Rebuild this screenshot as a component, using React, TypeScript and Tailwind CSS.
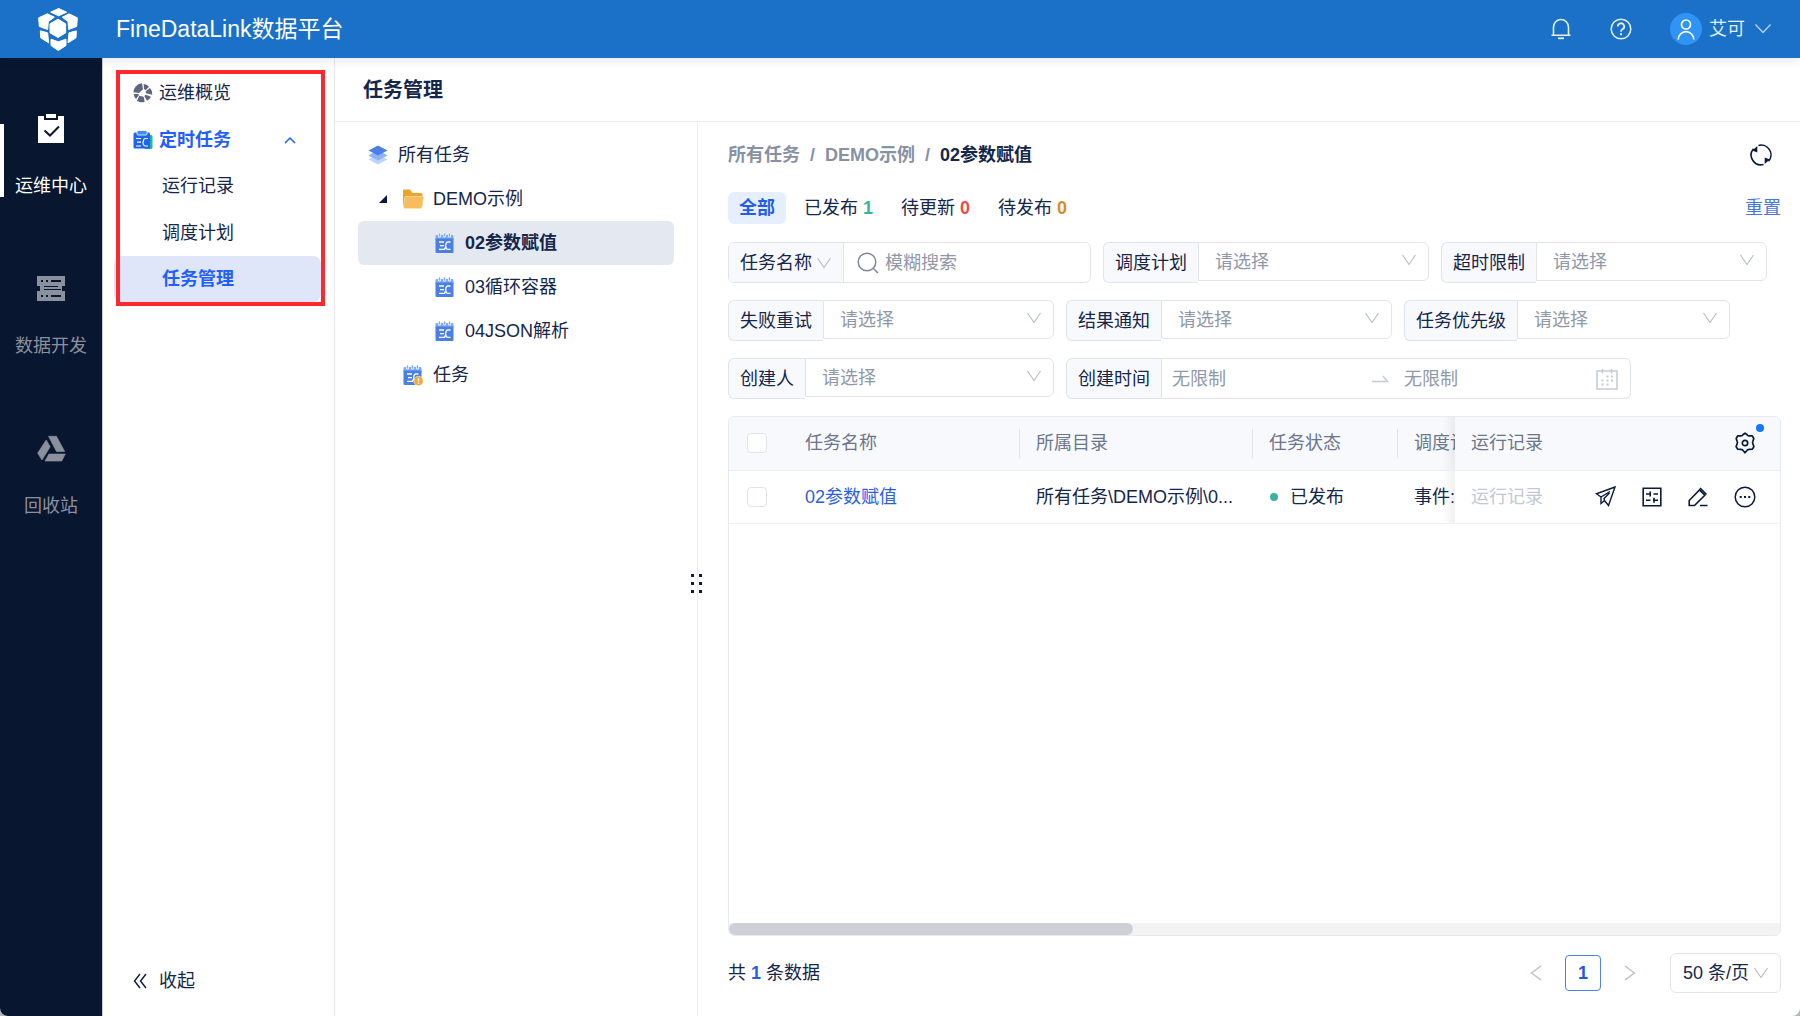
// App.tsx
// Ops center → task management page.
import React, { useState } from "react";
import clsx from "clsx";

/* ---------- icons ---------- */

function Logo() {
  return (
    <svg viewBox="112 20 126 134" className="h-[45px] w-[42px]" fill="#fff" stroke="#fff" strokeWidth="3" strokeLinejoin="round">
      <path d="M177 24 201 35 177 46 153 35Z" />
      <path d="M143 40 164 50 146 63 144 87 119 78 117 52Z" />
      <path d="M208 40 188 50 205 63 207 87 231 78 233 52Z" />
      <path d="M175 56 198 70V97L175 111 151 97V70Z" />
      <path d="M122 91 144 97 147 127 123 112Z" />
      <path d="M230 91 208 97 205 127 229 112Z" />
      <path d="M154 116 176 124 199 116V135L176 150 154 135Z" />
    </svg>
  );
}

function ClipboardIcon() {
  return (
    <svg viewBox="0 0 26 29" className="h-[29px] w-[26px]">
      <path d="M0 2h26v27H0z" fill="currentColor" />
      <path d="M6 0h14v6H6z" fill="#08162f" />
      <path d="M8 0h10v4H8z" fill="currentColor" />
      <path d="m6.500 16.500 5.500 5 9-9" fill="none" stroke="#08162f" strokeWidth="2" />
    </svg>
  );
}

function ServerIcon() {
  return (
    <svg viewBox="0 0 28 25" className="h-[25px] w-[28px]">
      <path d="M0 0h28v10H0zM3 10h22v5H3zM0 15h28v10H0z" fill="currentColor" />
      <path d="M4 4h2v2H4zM9 4h2v2H9zM14 4h10v2H14zM4 19h2v2H4zM9 19h2v2H9zM14 19h10v2H14zM0 10h3v5H0zM7 10h14v1H7zM7 13h17v1H7zM25 10h3v5h-3z" fill="#08162f" />
    </svg>
  );
}

function RecycleIcon() {
  return (
    <svg viewBox="108 584 88 80" className="h-[27px] w-[29px]" fill="currentColor" stroke="currentColor" strokeWidth="2" strokeLinejoin="round">
      <path d="M136 598 148 619 123 659 110 638Z" />
      <path d="M143 587H167L192 633H167Z" />
      <path d="M144 641H194L183 662H132Z" />
    </svg>
  );
}

function OverviewIcon() {
  return (
    <svg viewBox="399 249 60 60" className="size-5" fill="#5d6780">
      <path d="M400 277A28 28 0 0 1 426 250L429 268 417 279Z" />
      <path d="M431 252A27 27 0 0 1 447 260L437 271A10 10 0 0 0 432 268Z" />
      <path d="M450 264A26 26 0 0 1 457 284L438 280 437 274Z" />
      <path d="M437 284 453 290A25 25 0 0 1 441 302L433 288Z" />
      <path d="M418 287 431 290 434 305A26 26 0 0 1 411 302Z" />
      <path d="M401 282 415 282 417 285 408 297A24 24 0 0 1 401 282Z" />
    </svg>
  );
}

function TimedTaskIcon() {
  return (
    <svg viewBox="0 0 20 20" className="size-5">
      <rect x="11" y="5" width="8.500" height="14" rx="1.500" fill="#1fb89a" />
      <path d="M2 2.500h13.500A1.500 1.500 0 0 1 17 4v14.500H2A1.500 1.500 0 0 1 .5 17V4A1.500 1.500 0 0 1 2 2.500Z" fill="#1f63f5" />
      <rect x="4" y=".500" width="10" height="4.500" rx="1" fill="#3f8cff" stroke="#fff" strokeWidth=".8" />
      <path d="M3 8.500h5M4 12.200h4M3 16h5M15 8.500h-2.500q-1.500 0-1.900 1.500l-.6 2.200q.2 3.800 2.500 3.800H15" fill="none" stroke="#fff" strokeWidth="1.200" />
    </svg>
  );
}

function CalendarTask({ warn = false }: { warn?: boolean }) {
  return (
    <svg viewBox="0 0 20 21" className="h-[21px] w-5 shrink-0">
      <path d="M1.500 2h16A1 1 0 0 1 18.500 3v4H.500V3a1 1 0 0 1 1-1Z" fill="#7eabf8" />
      <path d="M.500 5.500h18v13.500a1 1 0 0 1-1 1h-16a1 1 0 0 1-1-1Z" fill="#4b7fe8" />
      <path d="M4.500 1.500v1.500M9.500 1.500v1.500M14.500 1.500v1.500" stroke="#fff" strokeWidth="3" strokeLinecap="round" />
      <path d="M4.500 1v2M9.500 1v2M14.500 1v2" stroke="#7eabf8" strokeWidth="1.600" strokeLinecap="round" />
      <path d="M4 9h5M5 12.700h4M4 16.400h5.500l1.500-3M15.500 9h-2.500q-1.600 0-2 1.600l-.4 2.100q.3 3.700 2.600 3.700h2.300" fill="none" stroke="#fff" strokeWidth="1.300" />
      {warn && (
        <>
          <circle cx="15.500" cy="16" r="4.700" fill="#f0a93a" stroke="#fff" strokeWidth=".5" />
          <path d="M15.500 13.200v3.300M15.500 17.500v1.300" stroke="#fff" strokeWidth="1.300" />
        </>
      )}
    </svg>
  );
}

function LayersIcon() {
  return (
    <svg viewBox="0 0 20 20" className="size-5 shrink-0">
      <path d="m10 9 9.500 5.500L10 19.500.5 14.500Z" fill="#bcd3fd" />
      <path d="m10 5 9.500 5.500L10 15.500.5 10.500Z" fill="#8db2fa" />
      <path d="m10 .5 9.500 5L10 10.500.5 5.500Z" fill="#4b7fe8" />
    </svg>
  );
}

function FolderIcon() {
  return (
    <svg viewBox="0 0 22 20" className="h-5 w-[22px] shrink-0">
      <path d="M2 .5h6l2.500 3.500H19a1.500 1.500 0 0 1 1.500 1.500V17H2.500A1.500 1.500 0 0 1 1 15.500v-14a1 1 0 0 1 1-1Z" fill="#efa32d" />
      <path d="M4 7.500h16.500a1 1 0 0 1 1 1.200l-1.600 9.500a1.500 1.500 0 0 1-1.500 1.300H3a1.500 1.500 0 0 1-1.400-1.500L2.700 8.600A1.300 1.300 0 0 1 4 7.500Z" fill="#f9bc5a" stroke="#fde3b4" strokeWidth=".7" />
    </svg>
  );
}

function Chevron({ className }: { className?: string }) {
  return (
    <svg viewBox="0 0 16 12" className={clsx("h-3 w-4 shrink-0", className)} fill="none" stroke="currentColor" strokeWidth="1.200">
      <path d="M1.500 1 8 10.500 14.500 1" />
    </svg>
  );
}

function SearchIcon() {
  return (
    <svg viewBox="0 0 22 22" className="size-[22px] shrink-0" fill="none" stroke="#7c879c" strokeWidth="1.500">
      <circle cx="10" cy="10" r="8.800" />
      <path d="m16.500 16.500 4.500 4.500" />
    </svg>
  );
}

function DateIcon() {
  return (
    <svg viewBox="0 0 22 22" className="size-[22px]" fill="none" stroke="#c5cad5" strokeWidth="1.500">
      <path d="M1 3h20v18H1zM6.500 1v4.500M15.500 1v4.500" />
      <path d="M10.500 8.500h2M15 8.500h2M5.500 12.500h2M10.500 12.500h2M15 12.500h2M5.500 16.500h2M10.500 16.500h2" strokeWidth="2" />
    </svg>
  );
}

function RefreshIcon() {
  return (
    <svg viewBox="0 0 22 22" className="size-[22px]" fill="none" stroke="#0a1a3c" strokeWidth="1.600">
      <path d="M8.500 1.400A9.800 9.800 0 0 1 18.500 17.300M13.500 20.500A9.800 9.800 0 0 1 3.500 4.700" />
      <path d="M7.300 2v6.500L2.300 6.500ZM14.700 20v-6.500L19.700 15.500Z" fill="#0a1a3c" stroke="none" />
    </svg>
  );
}

function BellIcon() {
  return (
    <svg viewBox="0 0 20 22" className="h-[22px] w-5" fill="none" stroke="#e3eefa" strokeWidth="1.600">
      <path d="M2.500 17V9a7.500 7.500 0 0 1 15 0v8M.500 17.200h19" />
      <path d="M7 20.300h6" strokeWidth="1.800" />
    </svg>
  );
}

function HelpIcon() {
  return (
    <svg viewBox="0 0 22 22" className="size-[22px]" fill="none" stroke="#e3eefa" strokeWidth="1.500">
      <circle cx="11" cy="11" r="9.800" />
      <path d="M7.800 8.500a3.200 3.200 0 1 1 4.700 2.800q-1.500.8-1.500 2.500" strokeWidth="1.800" />
      <path d="M11 15.200v2" strokeWidth="2" />
    </svg>
  );
}

function GearIcon() {
  return (
    <svg viewBox="0 0 22 22" className="size-[22px]" fill="none" stroke="#0a1a3c" strokeWidth="1.700" strokeLinejoin="round">
      <path d="M8.800 2.800 11 1.200l2.200 1.600q.5 1 1.700 1l3.400.1 1.500 2.600-.9 2.700q-.8 1.300 0 2.700l1 2.600-1.500 2.600-3.500.2q-1.100 0-1.700 1L11 20.800l-2.200-2.500q-.6-1-1.700-1l-3.500-.2-1.500-2.600 1-2.600q.8-1.400 0-2.700l-.9-2.700 1.500-2.600 3.400-.1q1.200 0 1.700-1Z" />
      <circle cx="11" cy="11" r="2.700" />
    </svg>
  );
}

function SendIcon() {
  return (
    <svg viewBox="0 0 21 21" className="size-[21px]" fill="none" stroke="#0a1a3c" strokeWidth="1.400">
      <path d="M20 1 1.500 7.800 6 11v6.500l3.500-3 4 5ZM6 11l9-5.500M9.500 14.500l-.5-2 5.500-5.500" />
    </svg>
  );
}

function ParamIcon() {
  return (
    <svg viewBox="0 0 20 20" className="size-5" fill="none" stroke="#0a1a3c" strokeWidth="1.600">
      <path d="M1.200 1.200h17.600v17.600H1.200zM4 7h5M8.200 4.500v5M11.500 7h4.500M4 13.200h4.500M11 13.200h5M12 10.800v5" />
    </svg>
  );
}

function EditIcon() {
  return (
    <svg viewBox="0 0 20 20" className="size-5" fill="none" stroke="#0a1a3c" strokeWidth="1.600">
      <path d="M1.200 13.500 11.500 3l5.300 5.300L6.500 18.500H1.200ZM12 1l6.500 6.500M12 18.500h7.500" />
    </svg>
  );
}

function MoreIcon() {
  return (
    <svg viewBox="0 0 22 22" className="size-[22px]" fill="none" stroke="#0a1a3c" strokeWidth="1.500">
      <circle cx="11" cy="11" r="9.800" />
      <path d="M5.700 11h2M10 11h2M14.300 11h2" strokeWidth="2" />
    </svg>
  );
}

/* ---------- data ---------- */

const MODULES = [
  { label: "运维中心", icon: <ClipboardIcon /> },
  { label: "数据开发", icon: <ServerIcon /> },
  { label: "回收站", icon: <RecycleIcon /> },
];

const TABS = [
  { label: "已发布", count: 1, color: "text-[#3bb3a3]" },
  { label: "待更新", count: 0, color: "text-[#f04b4b]" },
  { label: "待发布", count: 0, color: "text-[#d98c1f]" },
];

const FILTER_BOX = "flex w-[326px] items-start";
const FILTER_LABEL = "flex h-[41px] shrink-0 items-center rounded-l-md border border-[#e1e4ed] bg-[#f8f9fd] px-[11px]";

/* ---------- parts ---------- */

function SelectFilter({ id, label }: { id: string; label: string }) {
  return (
    <div className={FILTER_BOX}>
      <label htmlFor={id} className={clsx(FILTER_LABEL, "border-r-0")}>{label}</label>
      <div className="relative min-w-0 flex-1">
        <select id={id} className="h-[39px] w-full appearance-none rounded-r-md border border-[#e1e4ed] bg-white pl-4 text-[#8f98aa] outline-none">
          <option>请选择</option>
        </select>
        <Chevron className="pointer-events-none absolute top-3 right-3 text-[#b9bfcb]" />
      </div>
    </div>
  );
}

function Topbar() {
  return (
    <header className="relative z-10 flex h-[58px] shrink-0 items-center bg-[#1a71c7] pr-7 pl-[37px] text-white shadow-[0_2px_10px_rgba(30,50,90,0.12)]">
      <Logo />
      <h1 className="ml-[37px] text-[23px]">FineDataLink数据平台</h1>
      <div className="ml-auto flex items-center">
        <button type="button" aria-label="通知" className="mr-[39px]"><BellIcon /></button>
        <button type="button" aria-label="帮助" className="mr-[38px]"><HelpIcon /></button>
        <button type="button" className="flex items-center text-[#e3eefa]">
          <span className="mr-[7px] flex size-8 items-center justify-center rounded-full bg-[#2f94f6]">
            <svg viewBox="0 0 18 21" className="h-[21px] w-[18px]" fill="none" stroke="#fff" strokeWidth="1.700">
              <circle cx="9" cy="5.500" r="4.500" />
              <path d="M1.200 20.500a7.800 7.800 0 0 1 15.600 0" />
            </svg>
          </span>
          艾可
          <svg viewBox="0 0 18 12" className="ml-[9px] h-3 w-[18px]" fill="none" stroke="#b5d2ef" strokeWidth="1.400">
            <path d="m1.500 1.500 7.500 8 7.500-8" />
          </svg>
        </button>
      </div>
    </header>
  );
}

function ModuleRail() {
  return (
    <nav className="flex w-[102px] shrink-0 flex-col bg-[#08162f] pt-[50px]">
      {MODULES.map((m, i) => (
        <a key={m.label} href="#" className={clsx("relative flex h-40 flex-col items-center", i === 0 ? "text-white" : "text-[#8b909d]")}>
          {i === 0 && <span className="absolute top-4 left-0 h-[73px] w-1 bg-white" />}
          <span className="flex h-10 items-center">{m.icon}</span>
          <span className="mt-[26px]">{m.label}</span>
        </a>
      ))}
    </nav>
  );
}

function SideMenu() {
  const [open, setOpen] = useState(true);
  return (
    <aside className="relative flex w-[233px] shrink-0 flex-col border-x border-[#e6e9f1] border-l-[#c8ccd5] pt-3">
      <div className="ml-[11px] flex w-[207px] flex-col">
        <a href="#" className="flex h-[46px] items-center gap-[6px] pl-[19px]"><OverviewIcon />运维概览</a>
        <button type="button" onClick={() => setOpen(!open)} className="flex h-[47px] items-center gap-[6px] pl-[19px] font-bold text-[#1f5eff]">
          <TimedTaskIcon />定时任务
          <svg viewBox="0 0 12 8" className="mr-[25px] ml-auto h-2 w-3" fill="none" stroke="currentColor" strokeWidth="1.500">
            <path d="m1 7 5-5 5 5" />
          </svg>
        </button>
        {open && (
          <>
            <a href="#" className="flex h-[46px] items-center pl-12">运行记录</a>
            <a href="#" className="flex h-[47px] items-center pl-12">调度计划</a>
            <a href="#" className="flex h-[46px] items-center rounded-lg bg-[#e0e6fa] pl-12 font-bold text-[#1f5eff]">任务管理</a>
          </>
        )}
      </div>
      {/* highlight frame round the menu group */}
      <div className="pointer-events-none absolute top-3 left-[13px] h-[236px] w-[209px] border-4 border-[#ff282d]" />
      <button type="button" className="mt-auto mb-[23px] flex items-center gap-3 pl-[30px]">
        <svg viewBox="0 0 14 16" className="h-4 w-[14px]" fill="none" stroke="#0a1a3c" strokeWidth="1.400">
          <path d="M7 1 1.500 8 7 15M13 1 7.500 8 13 15" />
        </svg>
        收起
      </button>
    </aside>
  );
}

function TaskTree() {
  return (
    <section className="relative w-[363px] shrink-0 border-r border-[#e9ebf0] px-[23px] pt-[11px]">
      <a href="#" className="flex h-11 items-center gap-[10px] pl-[10px]"><LayersIcon />所有任务</a>
      <a href="#" className="flex h-11 items-center pl-[21px]">
        <svg viewBox="0 0 8 8" className="mr-[15px] size-2"><path d="M8 0v8H0z" fill="#0a1a3c" /></svg>
        <FolderIcon />
        <span className="ml-[9px]">DEMO示例</span>
      </a>
      {["02参数赋值", "03循环容器", "04JSON解析"].map((name, i) => (
        <a key={name} href="#" className={clsx("flex h-11 items-center gap-[10px] rounded-md pl-[77px]", i === 0 && "bg-[#e4e8f0] font-bold")}>
          <CalendarTask />{name}
        </a>
      ))}
      <a href="#" className="flex h-11 items-center gap-[10px] pl-[45px]"><CalendarTask warn />任务</a>
      {/* resize handle */}
      <div className="absolute top-1/2 -right-[5px] z-10 grid h-7 w-[11px] grid-cols-2 content-center gap-[5px]">
        {[0, 1, 2, 3, 4, 5].map((d) => <span key={d} className="size-[3px] bg-[#0a1a3c]" />)}
      </div>
    </section>
  );
}

function Filters() {
  return (
    <form className="mt-[18px] flex flex-col gap-[17px]">
      <div className="flex gap-3">
        <div className="flex h-[41px] w-[363px] overflow-hidden rounded-md border border-[#e1e4ed]">
          <div className="relative w-[115px] shrink-0 border-r border-[#e1e4ed] bg-[#f8f9fd]">
            <select aria-label="搜索字段" className="h-full w-full appearance-none bg-transparent pl-[11px] outline-none">
              <option>任务名称</option>
            </select>
            <Chevron className="pointer-events-none absolute top-[14px] right-[11px] text-[#b9bfcb]" />
          </div>
          <label htmlFor="keyword" className="flex items-center pl-[13px]"><SearchIcon /></label>
          <input id="keyword" placeholder="模糊搜索" className="min-w-0 flex-1 pl-[6px] outline-none placeholder:text-[#8f98aa]" />
        </div>
        <SelectFilter id="plan" label="调度计划" />
        <SelectFilter id="timeout" label="超时限制" />
      </div>
      <div className="flex gap-3">
        <SelectFilter id="retry" label="失败重试" />
        <SelectFilter id="notice" label="结果通知" />
        <SelectFilter id="priority" label="任务优先级" />
      </div>
      <div className="flex gap-3">
        <SelectFilter id="creator" label="创建人" />
        <div className="flex h-[41px] w-[565px]">
          <label htmlFor="from" className={FILTER_LABEL}>创建时间</label>
          <div className="flex min-w-0 flex-1 items-center rounded-r-md border border-l-0 border-[#e1e4ed] pr-3 pl-[10px]">
            <input id="from" placeholder="无限制" className="w-[200px] outline-none placeholder:text-[#8f98aa]" />
            <svg viewBox="0 0 17 8" className="mr-[15px] h-2 w-[17px] shrink-0" fill="none" stroke="#c5cad5" strokeWidth="1.500">
              <path d="M0 6.500h15.500L11 1" />
            </svg>
            <input aria-label="结束时间" placeholder="无限制" className="min-w-0 flex-1 outline-none placeholder:text-[#8f98aa]" />
            <DateIcon />
          </div>
        </div>
      </div>
    </form>
  );
}

const CHECKBOX = "block size-5 appearance-none rounded border border-[#dfe3ec] bg-white";
const DIVIDED = "relative pl-[17px] text-left font-normal before:absolute before:top-3 before:left-0 before:h-[29px] before:w-px before:bg-[#e1e4ed]";
const PINNED = "relative pl-4 before:absolute before:inset-y-0 before:-left-3 before:w-3 before:bg-linear-to-r before:from-transparent before:to-black/6";

function TaskTable() {
  return (
    <div className="mt-[17px] flex flex-1 flex-col overflow-hidden rounded-md border border-[#e8eaf2]">
      <table className="w-full table-fixed border-collapse whitespace-nowrap">
        <colgroup>
          <col className="w-[60px]" />
          <col className="w-[230px]" />
          <col className="w-[233px]" />
          <col className="w-[145px]" />
          <col />
          <col className="w-[325px]" />
        </colgroup>
        <thead>
          <tr className="h-[53px] border-b border-[#eceef4] bg-[#f8f9fd] text-[#6b768c]">
            <th className="pl-[18px]"><input type="checkbox" aria-label="全选" className={CHECKBOX} /></th>
            <th className="pl-4 text-left font-normal">任务名称</th>
            <th className={DIVIDED}>所属目录</th>
            <th className={DIVIDED}>任务状态</th>
            <th className={DIVIDED}><div className="overflow-hidden">调度计划</div></th>
            <th className={clsx(PINNED, "text-left font-normal")}>
              <div className="flex items-center justify-between pr-6">
                运行记录
                <button type="button" aria-label="列设置" className="relative">
                  <GearIcon />
                  <span className="absolute -top-2 -right-2 size-2 rounded-full bg-[#1677ff]" />
                </button>
              </div>
            </th>
          </tr>
        </thead>
        <tbody>
          <tr className="h-[53px] border-b border-[#f0f1f5]">
            <td className="pl-[18px]"><input type="checkbox" aria-label="选择 02参数赋值" className={CHECKBOX} /></td>
            <td className="pl-4"><a href="#" className="text-[#2b5ee8]">02参数赋值</a></td>
            <td className="pl-[17px]">所有任务\DEMO示例\0...</td>
            <td className="pl-[17px]">
              <div className="flex items-center gap-3 pl-px">
                <span className="size-2 rounded-full bg-[#3bb3a3]" />已发布
              </div>
            </td>
            <td className="pl-[17px]"><div className="overflow-hidden">事件:</div></td>
            <td className={PINNED}>
              <div className="flex items-center gap-[26px] pr-6">
                <span className="mr-auto text-[#c3c8d2]">运行记录</span>
                <button type="button" aria-label="发布"><SendIcon /></button>
                <button type="button" aria-label="参数"><ParamIcon /></button>
                <button type="button" aria-label="编辑"><EditIcon /></button>
                <button type="button" aria-label="更多"><MoreIcon /></button>
              </div>
            </td>
          </tr>
        </tbody>
      </table>
      <div className="mt-auto h-3 bg-[#f3f3f4]">
        <div className="h-3 w-5/13 rounded-full bg-[#cdd1d7]" />
      </div>
    </div>
  );
}

function Pagination() {
  return (
    <footer className="mt-[17px] flex h-10 items-center">
      <p>共 <b className="text-[#2b5ee8]">1</b> 条数据</p>
      <div className="ml-auto flex items-center">
        <button type="button" aria-label="上一页">
          <svg viewBox="0 0 12 16" className="h-4 w-3" fill="none" stroke="#b9bfcb" strokeWidth="1.400"><path d="M11 1 1.500 8l9.500 7" /></svg>
        </button>
        <button type="button" className="mx-[23px] size-9 rounded-sm border border-[#4d7ff0] font-bold text-[#1f56e8]">1</button>
        <button type="button" aria-label="下一页">
          <svg viewBox="0 0 12 16" className="h-4 w-3" fill="none" stroke="#b9bfcb" strokeWidth="1.400"><path d="m1 1 9.500 7L1 15" /></svg>
        </button>
        <div className="relative ml-[34px]">
          <select aria-label="每页条数" className="h-10 w-[111px] appearance-none rounded-md border border-[#e1e4ed] bg-white pl-3 outline-none">
            <option>50 条/页</option>
          </select>
          <Chevron className="pointer-events-none absolute top-[14px] right-3 text-[#b9bfcb]" />
        </div>
      </div>
    </footer>
  );
}

export default function App() {
  return (
    <div className="bg-[#b4b6ba] font-['Liberation_Sans','Noto_Sans_CJK_SC',sans-serif] text-[18px] leading-6 text-[#14264b]">
      <div className="flex min-h-screen flex-col overflow-hidden rounded-b-lg bg-white">
        <Topbar />
        <div className="flex flex-1">
          <ModuleRail />
          <SideMenu />
          <main className="flex min-w-0 flex-1 flex-col">
            <div className="flex h-16 shrink-0 items-center border-b border-[#e9ebf0] pl-7">
              <h2 className="text-[20px] font-bold">任务管理</h2>
            </div>
            <div className="flex flex-1">
              <TaskTree />
              <section className="flex min-w-0 flex-1 flex-col pt-[21px] pr-[19px] pb-[23px] pl-[30px]">
                <div className="flex h-6 items-center justify-between">
                  <nav className="flex gap-[10px] font-bold text-[#8791a5]">
                    <a href="#">所有任务</a>
                    <span>/</span>
                    <a href="#">DEMO示例</a>
                    <span>/</span>
                    <span className="text-[#14264b]">02参数赋值</span>
                  </nav>
                  <button type="button" aria-label="刷新" className="mr-[9px]"><RefreshIcon /></button>
                </div>
                <div className="mt-[25px] flex h-8 items-center">
                  <button type="button" className="mr-[18px] h-8 rounded-md bg-[#e5efff] px-[11px] font-bold text-[#1f5eea]">全部</button>
                  {TABS.map((t) => (
                    <button key={t.label} type="button" className="mr-7">
                      {t.label} <b className={t.color}>{t.count}</b>
                    </button>
                  ))}
                  <a href="#" className="ml-auto text-[#4a74e8]">重置</a>
                </div>
                <Filters />
                <TaskTable />
                <Pagination />
              </section>
            </div>
          </main>
        </div>
      </div>
    </div>
  );
}
